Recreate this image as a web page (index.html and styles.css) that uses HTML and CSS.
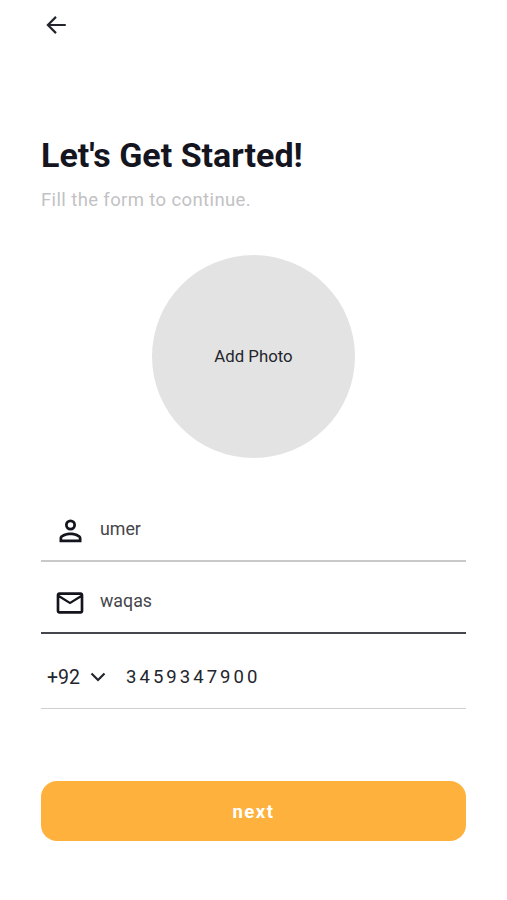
FILE: index.html
```html
<!DOCTYPE html>
<html lang="en">
<head>
<meta charset="utf-8">
<title>Let's Get Started</title>
<link rel="stylesheet" href="styles.css">
</head>
<body>
<main class="screen">
  <button class="back" aria-label="Back">
    <svg width="26" height="26" viewBox="0 0 24 24"><path d="M21 12H5M12 4.500 4.500 12l7.500 7.500" fill="none" stroke="#23252d" stroke-width="2"/></svg>
  </button>
  <h1 class="title">Let's Get Started!</h1>
  <p class="subtitle">Fill the form to continue.</p>
  <div class="photo-row"><div class="photo">Add Photo</div></div>
  <div class="field field-name">
    <span class="field-icon">
      <svg width="33" height="33" viewBox="0 0 24 24"><path fill="#14151c" d="M12 6a2 2 0 1 1 0 4 2 2 0 0 1 0-4m0 9.500c2.700 0 5.800 1.300 6 2V18.500H6v-1c.2-.7 3.300-2 6-2M12 4a4 4 0 1 0 0 8 4 4 0 0 0 0-8zm0 9.500c-2.700 0-8 1.300-8 4V20.500h16v-3c0-2.700-5.300-4-8-4z"/></svg>
    </span>
    <span class="field-text">umer</span>
  </div>
  <div class="field field-mail">
    <span class="field-icon">
      <svg width="32" height="32" viewBox="0 0 24 24"><path fill="#14151c" d="M22 6c0-1.100-.9-2-2-2H4c-1.100 0-2 .9-2 2v12c0 1.100.9 2 2 2h16c1.100 0 2-.9 2-2V6zm-2 0-8 5-8-5h16zm0 12H4V8l8 5 8-5v10z"/></svg>
    </span>
    <span class="field-text">waqas</span>
  </div>
  <div class="phone">
    <span class="code">+92</span>
    <svg class="chevron" width="24" height="24" viewBox="0 0 24 24"><path fill="none" stroke="#23252d" stroke-width="2.200" d="m5.500 8.500 6.500 6.500 6.500-6.500"/></svg>
    <span class="number">3459347900</span>
  </div>
  <button class="next">next</button>
</main>
</body>
</html>
```

FILE: styles.css
```css
* { box-sizing: border-box; }
html, body { margin: 0; padding: 0; background: #fff; }
body { font-family: Roboto, "Liberation Sans", sans-serif; color: #23252d; }
.screen { width: 507px; height: 900px; padding: 0 41px; overflow: hidden; }
.back { display: block; width: 26px; height: 26px; margin: 12px 0 0 2px; padding: 0; border: 0; background: none; }
.title { margin: 95px 0 0; height: 45px; font-size: 34px; line-height: 45px; font-weight: 700; color: #14151f; }
.subtitle { margin: 10px 0 0; font-size: 18.500px; line-height: 24px; color: #c2c2c4; letter-spacing: .38px; }
.photo-row { display: flex; justify-content: center; margin-top: 43px; }
.photo { display: flex; align-items: center; justify-content: center; width: 203px; height: 203px; padding-bottom: 2px; border-radius: 50%; background: #e3e3e3; font-size: 16.800px; color: #23252d; }
.field { display: flex; align-items: center; height: 72px; padding-top: 7px; border-bottom: 2px solid #c9c9c9; }
.field-name { margin-top: 31px; height: 73px; }
.field-mail { border-bottom-color: #45464b; }
.field-icon { display: flex; justify-content: center; width: 58px; margin: 5px 1px 0 0; }
.field-text { font-size: 17.800px; color: #45464c; }
.phone { display: flex; align-items: center; height: 75px; padding: 12px 0 0 6px; border-bottom: 1px solid #cfcfcf; font-size: 19.500px; }
.chevron { margin-left: 6px; }
.number { margin-left: 16px; font-size: 18.500px; letter-spacing: 3.050px; }
.next { display: block; width: 425px; height: 60px; margin-top: 72px; padding-top: 3px; border: 0; border-radius: 16px; background: #ffb13d; color: #fff; font-family: inherit; font-size: 18.500px; font-weight: 700; letter-spacing: 1.500px; }
```
